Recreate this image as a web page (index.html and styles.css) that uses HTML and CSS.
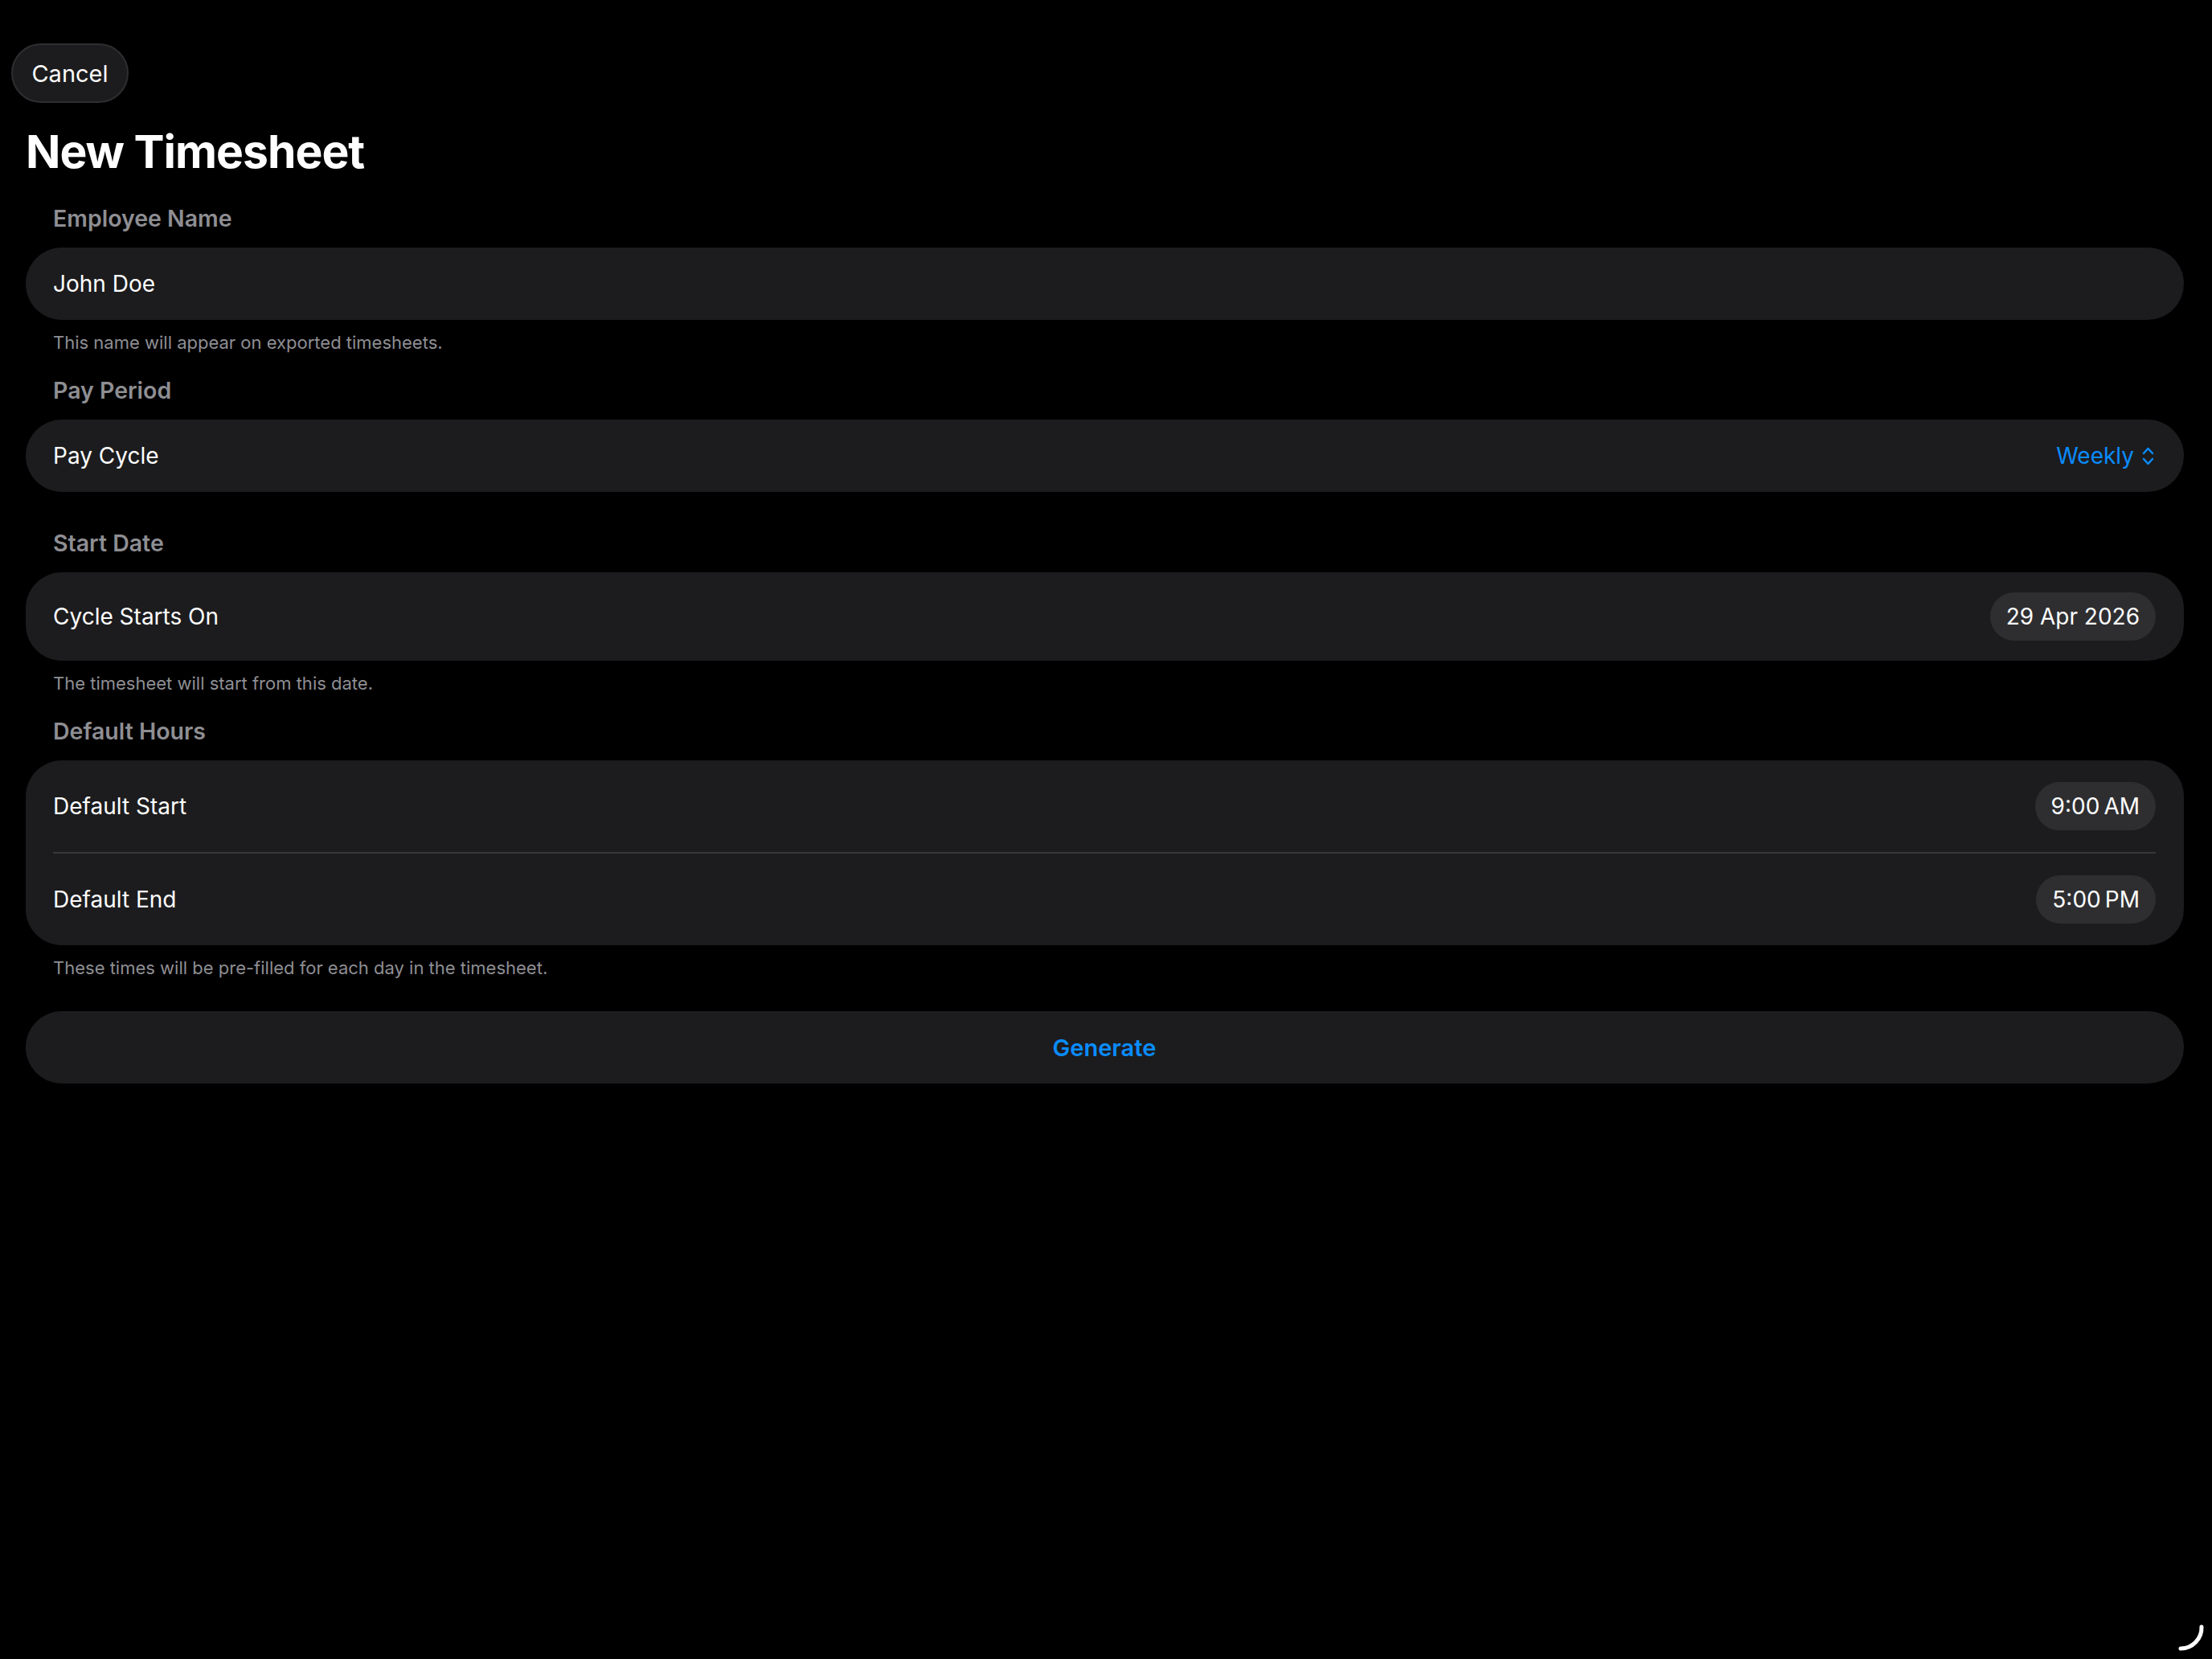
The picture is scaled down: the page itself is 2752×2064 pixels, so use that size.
FILE: index.html
```html
<!DOCTYPE html>
<html lang="en">
  <head>
    <meta charset="UTF-8" />
    <meta name="viewport" content="width=device-width, initial-scale=1.0" />
    <title>New Timesheet</title>
    <link rel="stylesheet" href="styles.css">
  </head>
  <body>
    <div class="toolbar">
      <button class="cancel-button">Cancel</button>
    </div>

    <main class="form">
      <h1 class="title">New Timesheet</h1>

      <section class="section">
        <h2 class="section-label">Employee Name</h2>
        <div class="card">
          <div class="row">John Doe</div>
        </div>
        <p class="section-footer">This name will appear on exported timesheets.</p>
      </section>

      <section class="section section--plain">
        <h2 class="section-label">Pay Period</h2>
        <div class="card">
          <div class="row">
            <span>Pay Cycle</span>
            <span class="picker">
              Weekly
              <svg class="chevrons" width="15" height="27" viewBox="0 0 15 27">
                <path d="M2 10 L7.5 4 L13 10" />
                <path d="M2 17 L7.5 23 L13 17" />
              </svg>
            </span>
          </div>
        </div>
      </section>

      <section class="section">
        <h2 class="section-label">Start Date</h2>
        <div class="card">
          <div class="row row--pill">
            <span>Cycle Starts On</span>
            <span class="pill">29 Apr 2026</span>
          </div>
        </div>
        <p class="section-footer">The timesheet will start from this date.</p>
      </section>

      <section class="section">
        <h2 class="section-label">Default Hours</h2>
        <div class="card">
          <div class="row row--time">
            <span>Default Start</span>
            <span class="pill">9:00&#8201;AM</span>
          </div>
          <div class="divider"></div>
          <div class="row row--time">
            <span>Default End</span>
            <span class="pill">5:00&#8201;PM</span>
          </div>
        </div>
        <p class="section-footer">These times will be pre-filled for each day in the timesheet.</p>
      </section>

      <div class="card generate">
        <div class="row row--center">Generate</div>
      </div>
    </main>

    <!-- window resize grip -->
    <svg class="resize-grip" width="40" height="40" viewBox="0 0 40 40">
      <path d="M33 6 A 26 26 0 0 1 7 33" />
    </svg>
  </body>
</html>
```

FILE: styles.css
```css
body {
  margin: 0;
  padding: 0;
  min-height: 100vh;
  background-color: #000;
  font-family: Inter, "Noto Sans", sans-serif;
  color: white;
  font-size: 28px;
  overflow: hidden;
}

.toolbar {
  padding: 54px 0 0 14px;
}

.cancel-button {
  height: 74px;
  width: 146px;
  border-radius: 37px;
  background-color: #1c1c1e;
  border: 2px solid #2e2e30;
  color: white;
  font-family: inherit;
  font-size: 29px;
  padding: 0;
}

.form {
  padding: 0 35px 0 32px;
}

.title {
  margin: 26px 0 0;
  font-size: 57px;
  line-height: 70px;
  font-weight: 700;
  letter-spacing: -1px;
}

.section {
  margin-top: 24px;
}
.form .title + .section {
  margin-top: 28px;
}
/* no footer here, so leave the footer's room as space */
.section--plain {
  margin-bottom: 44px;
}

.section-label {
  margin: 0 0 16px;
  padding-left: 34px;
  font-size: 28.5px;
  line-height: 40px;
  font-weight: 600;
  color: #8e8e93;
}

.card {
  background-color: #1c1c1e;
  border-radius: 45px;
}

.row {
  display: flex;
  justify-content: space-between;
  align-items: center;
  min-height: 90px;
  padding: 0 35px 0 34px;
  box-sizing: border-box;
}
.row--pill {
  min-height: 110px;
}
.row--time {
  min-height: 114px;
}
.row--center {
  justify-content: center;
}

.section-footer {
  margin: 12px 0 0;
  padding-left: 34px;
  font-size: 22px;
  line-height: 32px;
  color: #8e8e93;
}

.picker {
  display: flex;
  align-items: center;
  gap: 10px;
  color: #0a8cff;
  margin-right: 2px;
}
.chevrons path {
  fill: none;
  stroke: #0a8cff;
  stroke-width: 2.5;
  stroke-linecap: round;
  stroke-linejoin: round;
}

.pill {
  height: 60px;
  line-height: 60px;
  padding: 0 20px;
  border-radius: 30px;
  background-color: #2e2e31;
}

.divider {
  height: 2px;
  margin: 0 35px 0 34px;
  background-color: #38383a;
}

.generate {
  margin-top: 38px;
  color: #0a8cff;
  font-weight: 600;
  font-size: 29px;
}

.resize-grip {
  position: fixed;
  right: 6px;
  bottom: 6px;
}
.resize-grip path {
  fill: none;
  stroke: white;
  stroke-width: 5;
  stroke-linecap: round;
}
```
